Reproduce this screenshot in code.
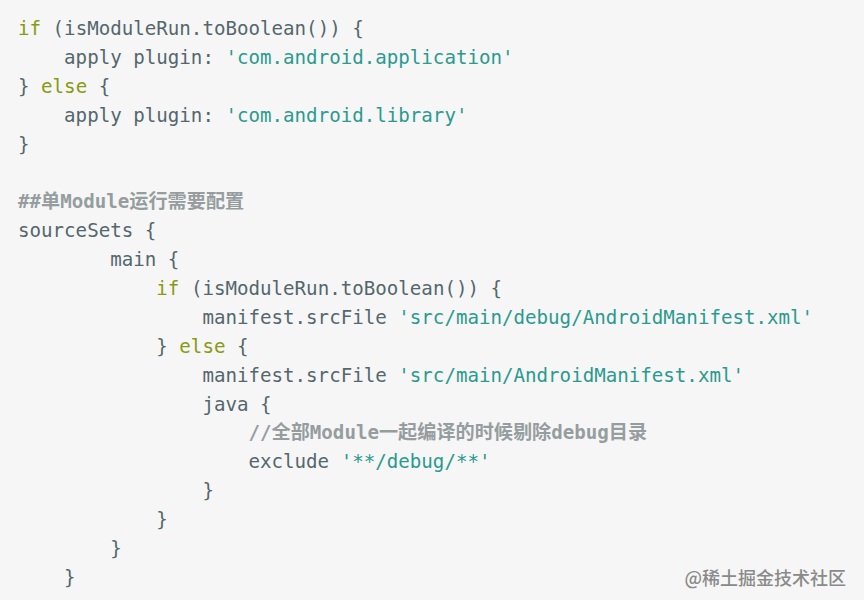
const KW = "text-[#889a12]";
const STR = "text-[#2b9a8f]";
const CMT = "text-[#959d9f] font-bold";

type Seg = [string, string?];

const lines: Seg[][] = [
  [["if", KW], [" (isModuleRun.toBoolean()) {"]],
  [["    apply plugin: "], ["'com.android.application'", STR]],
  [["} "], ["else", KW], [" {"]],
  [["    apply plugin: "], ["'com.android.library'", STR]],
  [["}"]],
  [[""]],
  [["##单Module运行需要配置", CMT]],
  [["sourceSets {"]],
  [["        main {"]],
  [["            "], ["if", KW], [" (isModuleRun.toBoolean()) {"]],
  [["                manifest.srcFile "], ["'src/main/debug/AndroidManifest.xml'", STR]],
  [["            } "], ["else", KW], [" {"]],
  [["                manifest.srcFile "], ["'src/main/AndroidManifest.xml'", STR]],
  [["                java {"]],
  [["                    "], ["//全部Module一起编译的时候剔除debug目录", CMT]],
  [["                    exclude "], ["'**/debug/**'", STR]],
  [["                }"]],
  [["            }"]],
  [["        }"]],
  [["    }"]],
];

export default function App() {
  return (
    <div className="relative h-[600px] w-[864px] overflow-hidden bg-[#f6f6f6]">
      <pre
        className="whitespace-pre px-[18px] pt-[15px] text-[19.15px] leading-[28.9px] text-[#54676d]"
        style={{ fontFamily: '"DejaVu Sans Mono", "Noto Sans CJK SC", monospace' }}
      >
        {lines.map((segs, i) => (
          <div key={i} className="h-[28.9px]">
            {segs.map(([text, cls], j) => (
              <span key={j} className={cls}>
                {text}
              </span>
            ))}
          </div>
        ))}
      </pre>

      {/* watermark */}
      <div
        className="absolute bottom-[14px] right-[18px] text-[18px] font-medium leading-none text-[#8a8a8a]"
        style={{ fontFamily: '"Noto Sans CJK SC", "Noto Sans", sans-serif' }}
      >
        @稀土掘金技术社区
      </div>
    </div>
  );
}
